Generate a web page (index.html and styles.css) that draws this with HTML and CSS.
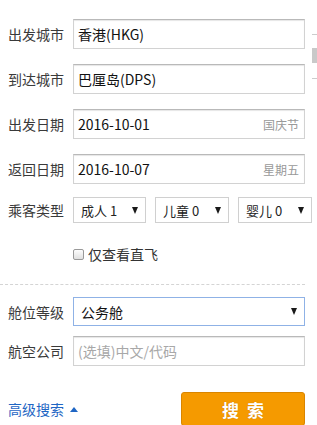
FILE: index.html
```html
<!DOCTYPE html>
<html lang="zh">
<head>
<meta charset="utf-8">
<link rel="stylesheet" href="styles.css">
</head>
<body>
<div class="edge">
  <div class="edge-line l1"></div>
  <div class="edge-block"></div>
  <div class="edge-line l2"></div>
</div>
<form class="form">
  <div class="row r1">
    <label class="label">出发城市</label>
    <div class="field"><span class="val">香港(HKG)</span></div>
  </div>
  <div class="row r2">
    <label class="label">到达城市</label>
    <div class="field"><span class="val">巴厘岛(DPS)</span></div>
  </div>
  <div class="row r3">
    <label class="label">出发日期</label>
    <div class="field"><span class="val">2016-10-01</span><span class="hint">国庆节</span></div>
  </div>
  <div class="row r4">
    <label class="label">返回日期</label>
    <div class="field"><span class="val">2016-10-07</span><span class="hint">星期五</span></div>
  </div>
  <div class="row r5">
    <label class="label">乘客类型</label>
    <div class="selects">
      <div class="sel s1"><span>成人 1</span><span class="arrow"></span></div>
      <div class="sel s2"><span>儿童 0</span><span class="arrow"></span></div>
      <div class="sel s3"><span>婴儿 0</span><span class="arrow"></span></div>
    </div>
  </div>
  <div class="check-row">
    <span class="checkbox"></span><span class="check-text">仅查看直飞</span>
  </div>
  <div class="divider"></div>
  <div class="row r6">
    <label class="label">舱位等级</label>
    <div class="field cabin"><span class="val">公务舱</span><span class="arrow"></span></div>
  </div>
  <div class="row r7">
    <label class="label">航空公司</label>
    <div class="field"><span class="placeholder">(选填)中文/代码</span></div>
  </div>
  <div class="bottom">
    <a class="adv">高级搜索<span class="tri"></span></a>
    <button type="button" class="search">搜索</button>
  </div>
</form>
</body>
</html>
```

FILE: styles.css
```css
* { box-sizing: border-box; }
html, body { margin: 0; padding: 0; background: #fff; }
body {
  width: 317px;
  height: 425px;
  overflow: hidden;
  position: relative;
  font-family: "Noto Sans CJK SC", "Liberation Sans", sans-serif;
  color: #222;
  font-size: 14px;
}
.edge { position: absolute; right: 0; top: 0; width: 5px; height: 90px; }
.edge-line { position: absolute; left: 0; width: 5px; height: 1px; background: #ccc; }
.l1 { top: 34px; }
.l2 { top: 78px; }
.edge-block { position: absolute; left: 0; top: 48px; width: 5px; height: 15px; background: #c9c9c9; }

.form { padding: 19px 0 0 8px; }
.row { display: flex; align-items: center; }
.label { width: 65px; font-size: 14px; color: #3a3a3a; line-height: 20px; }
.field {
  width: 232px;
  height: 30px;
  border: 1px solid #d2d2d2;
  border-top-color: #b9b9b9;
  box-shadow: inset 0 1px 1px #e6e6e6;
  display: flex;
  align-items: center;
  justify-content: space-between;
  padding: 0 5px 0 4px;
  background: #fff;
}
.val { font-size: 14px; color: #111; line-height: 20px; }
.hint { font-size: 12px; color: #999; }
.placeholder { font-size: 14px; color: #a8a8a8; }
.r1, .r2, .r3 { margin-bottom: 15px; }
.r4 { margin-bottom: 13px; }

.selects { display: flex; gap: 9px; }
.sel {
  height: 26px;
  border: 1px solid #d0d0d0;
  display: flex;
  align-items: center;
  justify-content: space-between;
  padding: 0 6px 0 7px;
  font-size: 13px;
  color: #222;
}
.s1 { width: 73px; }
.s2 { width: 74px; }
.s3 { width: 74px; }
.arrow {
  width: 0; height: 0;
  border-left: 3.5px solid transparent;
  border-right: 3.5px solid transparent;
  border-top: 7px solid #1a1a1a;
  margin-right: 1px;
}

.check-row {
  display: flex;
  align-items: center;
  height: 20px;
  margin: 21px 0 0 65px;
}
.checkbox {
  width: 11px;
  height: 11px;
  border: 1px solid #999;
  border-radius: 2px;
  background: linear-gradient(#fdfdfd, #e0e0e0);
  margin-right: 4px;
}
.check-text { font-size: 14px; color: #333; }

.divider {
  margin: 20px 0 0 -8px;
  width: 305px;
  border-top: 1px dashed #d4d4d4;
}
.r6 { margin-top: 12px; margin-bottom: 10px; }
.cabin {
  height: 29px;
  border: 1px solid #8fb2e6;
  box-shadow: none;
  padding: 0 6px 0 7px;
}

.bottom {
  display: flex;
  justify-content: space-between;
  align-items: center;
  width: 297px;
  margin-top: 26px;
}
.adv {
  color: #1f66c4;
  font-size: 14px;
  display: flex;
  align-items: center;
}
.tri {
  width: 0; height: 0;
  border-left: 4px solid transparent;
  border-right: 4px solid transparent;
  border-bottom: 5px solid #1f66c4;
  margin-left: 6px;
}
.search {
  width: 124px;
  height: 34px;
  background: #f59a00;
  border: 1px solid #d98500;
  border-radius: 3px;
  color: #fff;
  font-family: "Noto Sans CJK SC", sans-serif;
  font-weight: bold;
  font-size: 17px;
  letter-spacing: 8px;
  padding: 0 0 0 8px;
  text-shadow: 0 0 1px #c07000;
}
```
